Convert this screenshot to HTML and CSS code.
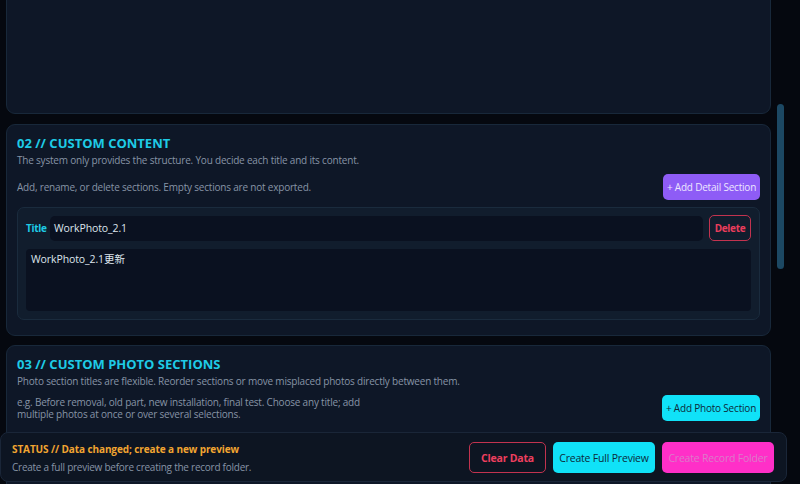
FILE: index.html
```html
<!DOCTYPE html>
<html lang="en">
<head>
<meta charset="utf-8">
<title>Record Builder</title>
<link rel="stylesheet" href="styles.css">
</head>
<body>
<div class="scroller">
  <main class="main">
    <section class="card card-top"></section>

    <section class="card card-content">
      <h2 class="card-title">02 // CUSTOM CONTENT</h2>
      <p class="desc">The system only provides the structure. You decide each title and its content.</p>
      <div class="action-row">
        <p class="desc">Add, rename, or delete sections. Empty sections are not exported.</p>
        <button class="btn btn-purple">+ Add Detail Section</button>
      </div>
      <div class="detail">
        <div class="detail-head">
          <span class="label">Title</span>
          <div class="input">WorkPhoto_2.1</div>
          <button class="btn btn-delete">Delete</button>
        </div>
        <div class="textarea">WorkPhoto_2.1更新</div>
      </div>
    </section>

    <section class="card card-photo">
      <h2 class="card-title">03 // CUSTOM PHOTO SECTIONS</h2>
      <p class="desc">Photo section titles are flexible. Reorder sections or move misplaced photos directly between them.</p>
      <div class="action-row action-row-photo">
        <p class="desc desc-narrow">e.g. Before removal, old part, new installation, final test. Choose any title; add multiple photos at once or over several selections.</p>
        <button class="btn btn-cyan">+ Add Photo Section</button>
      </div>
    </section>
  </main>
  <div class="scroll-thumb"></div>
</div>

<footer class="status">
  <div class="status-text">
    <div class="status-title">STATUS // Data changed; create a new preview</div>
    <div class="status-desc">Create a full preview before creating the record folder.</div>
  </div>
  <div class="status-actions">
    <button class="btn btn-clear">Clear Data</button>
    <button class="btn btn-preview">Create Full Preview</button>
    <button class="btn btn-record">Create Record Folder</button>
  </div>
</footer>
</body>
</html>
```

FILE: styles.css
```css
* { box-sizing: border-box; }
html, body {
  margin: 0;
  padding: 0;
  height: 100%;
  overflow: hidden;
  background: #05080f;
  font-family: "Open Sans", "Noto Sans CJK SC", sans-serif;
  color: #c9d3df;
}
.scroller {
  position: relative;
  width: 787px;
  height: 484px;
  overflow: hidden;
}
.main {
  display: flex;
  flex-direction: column;
  gap: 10px;
  padding: 0 16px 0 6px;
  margin-top: -12px;
}
.card {
  background: #0e1727;
  border: 1px solid #18283a;
  border-radius: 9px;
  padding: 8px 10px 16px 10px;
}
.card-top { height: 126px; }
.card-content { height: 212px; }
.card-photo { height: 160px; margin-top: -1px; }
.card-title {
  margin: 0;
  font-size: 13px;
  font-weight: 700;
  color: #1ecbe6;
  line-height: 20px;
}
.desc {
  margin: 0;
  font-size: 10px;
  letter-spacing: -0.2px;
  line-height: 14px;
  color: #8794a6;
}
.action-row {
  display: flex;
  justify-content: space-between;
  align-items: flex-end;
  margin-top: 7px;
}
.action-row .desc { padding-bottom: 6px; }
.desc-narrow { max-width: 345px; line-height: 12px; }
.action-row-photo { margin-top: 7px; }
.action-row-photo .desc { padding-bottom: 1px; }
.btn {
  font-family: inherit;
  font-size: 10px;
  letter-spacing: -0.2px;
  border-radius: 5px;
  border: none;
  cursor: pointer;
  white-space: nowrap;
  padding: 0;
}
.btn-purple {
  background: #8e5cf6;
  color: #ede6ff;
  height: 26px;
  width: 97px;
}
.btn-cyan {
  background: #10e2f8;
  color: #0c2a3a;
  height: 26px;
  width: 98px;
}
.detail {
  margin-top: 7px;
  background: #111d2d;
  border: 1px solid #1a2b3d;
  border-radius: 7px;
  padding: 7px 8px 8px 8px;
}
.detail-head {
  display: flex;
  align-items: center;
  gap: 6px;
}
.label {
  color: #1ecbe6;
  font-weight: 700;
  font-size: 10px;
  letter-spacing: -0.3px;
  width: 18px;
}
.input {
  flex: 1;
  height: 25px;
  line-height: 25px;
  background: #0a1120;
  border-radius: 5px;
  padding-left: 4px;
  font-size: 10.5px;
  letter-spacing: -0.1px;
  color: #dde4ec;
}
.btn-delete {
  background: transparent;
  border: 1px solid #c2334f;
  color: #ea3d5c;
  font-weight: 700;
  height: 26px;
  width: 42px;
  font-size: 10px;
  letter-spacing: -0.3px;
}
.textarea {
  margin-top: 8px;
  height: 62px;
  background: #0a1120;
  border-radius: 4px;
  padding: 3px 5px;
  font-size: 10.5px;
  letter-spacing: -0.1px;
  line-height: 14px;
  color: #dde4ec;
}
.scroll-thumb {
  position: absolute;
  left: 777px;
  top: 104px;
  width: 7px;
  height: 165px;
  border-radius: 4px;
  background: #1c4863;
}
.status {
  position: fixed;
  left: 0;
  top: 432px;
  width: 787px;
  height: 50px;
  background: #0d1522;
  border: 1px solid #1a2638;
  border-radius: 8px;
  display: flex;
  align-items: center;
  justify-content: space-between;
  padding: 0 11px 0 11px;
}
.status-text { margin-top: 3px; }
.status-title {
  color: #f2a531;
  font-weight: 700;
  font-size: 10px;
  letter-spacing: -0.1px;
  line-height: 16px;
}
.status-desc {
  color: #8794a6;
  font-size: 10px;
  letter-spacing: -0.25px;
  line-height: 20px;
}
.status-actions {
  display: flex;
  gap: 7px;
  margin-right: 1px;
  margin-top: 1px;
}
.status-actions .btn {
  height: 31px;
  font-size: 10.5px;
  letter-spacing: -0.2px;
}
.btn-clear {
  background: transparent;
  border: 1px solid #c2334f;
  color: #ef3f5f;
  font-weight: 700;
  width: 77px;
}
.btn-preview {
  background: #10e2f8;
  color: #0c2a3a;
  width: 102px;
}
.btn-record {
  background: #ff2fc8;
  color: #dc7ac9;
  width: 112px;
}
```
